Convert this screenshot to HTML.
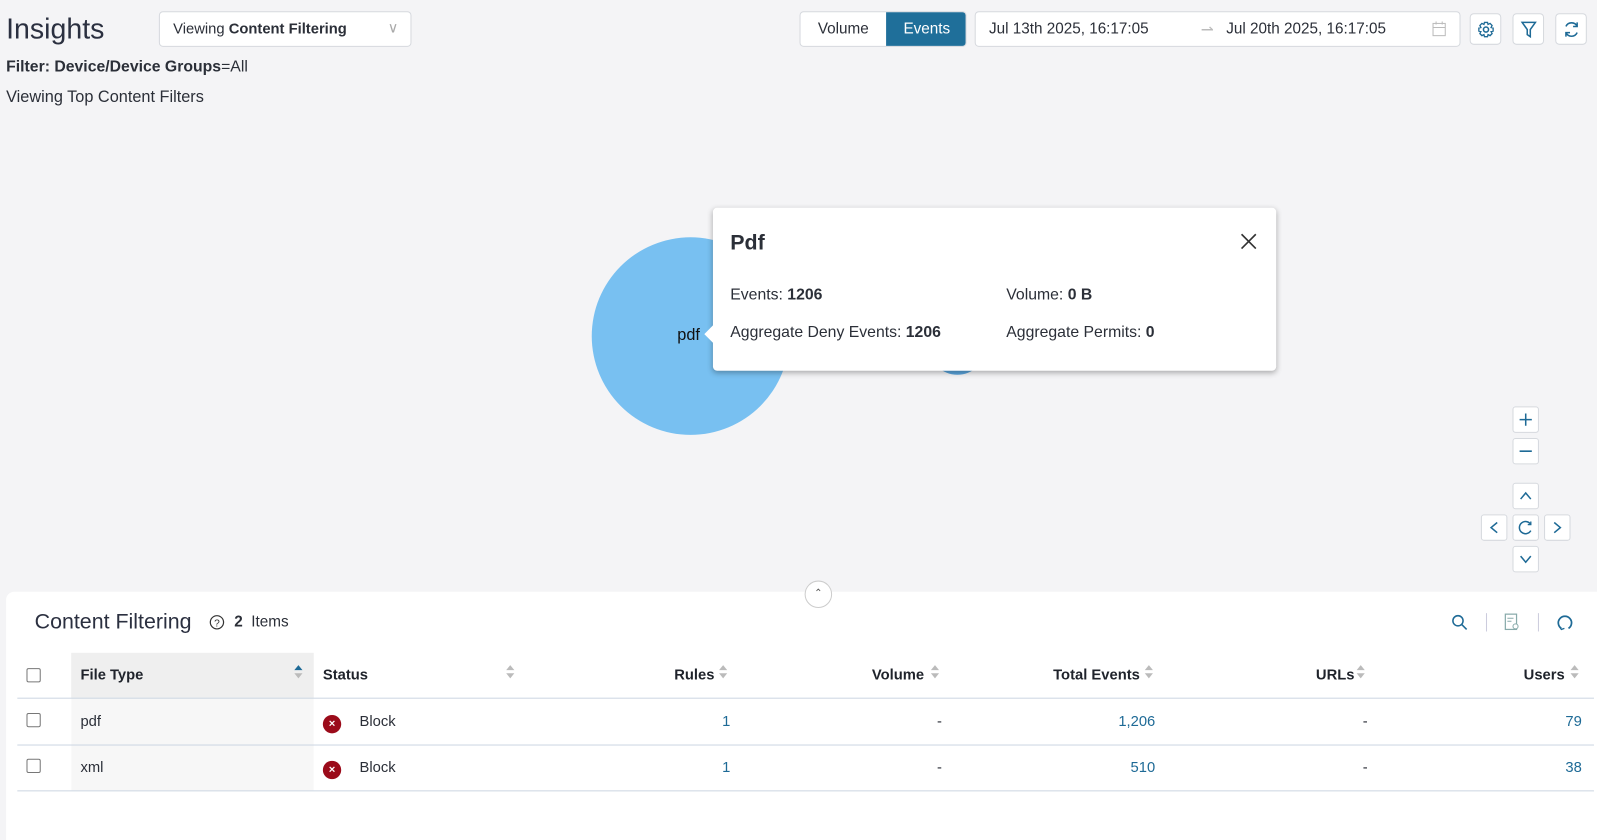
<!DOCTYPE html>
<html><head><meta charset="utf-8"><style>
*{box-sizing:border-box;margin:0;padding:0}
body{width:1597px;height:825px;background:#f4f4f6;font-family:"Liberation Sans",sans-serif;color:#2b2f38;position:relative;overflow:hidden;font-size:14px}
#w{position:absolute;left:0;top:0;width:1568px;height:810px;transform:scale(1.0185);transform-origin:0 0}
.a{position:absolute}
.btn{position:absolute;background:#fff;border:1px solid #d6d9de;border-radius:4px}
.ico{position:absolute;width:31px;height:31px;background:#fff;border:1px solid #d6d9de;border-radius:4px;display:flex;align-items:center;justify-content:center}
.nav{position:absolute;width:26px;height:26px;background:#fff;border:1px solid #d6d9de;border-radius:3px;display:flex;align-items:center;justify-content:center}
.th{position:absolute;top:655px;font-weight:bold;font-size:14.5px;color:#1f232b}
.s{position:absolute;width:8px;height:14px}
.s:before{content:"";position:absolute;left:0;top:0;border:4px solid transparent;border-bottom:5px solid #bbb;border-top:0}
.s:after{content:"";position:absolute;left:0;top:8px;border:4px solid transparent;border-top:5px solid #bbb;border-bottom:0}
.cb{position:absolute;left:26px;width:14px;height:14px;border:1px solid #777;border-radius:2px;background:#fff}
.td{position:absolute;font-size:14.5px}
.lk{color:#1e6a96}
.x{position:absolute;left:317px;width:18px;height:18px;border-radius:50%;background:#9b0b1a;color:#fff;font-size:11px;font-weight:bold;text-align:center;line-height:18px}
</style></head><body><div id="w">
<div class="a" style="left:6px;top:13px;font-size:28px;color:#2b3040">Insights</div>
<div class="btn" style="left:156px;top:11px;width:248px;height:35px;font-size:14.5px;padding:9px 0 0 13px">Viewing <b>Content Filtering</b><span class="a" style="right:12px;top:7px;color:#aaa;font-size:14px">&#8744;</span></div>
<div class="a" style="left:6px;top:57px;font-size:15.5px"><b>Filter: Device/Device Groups</b>=All</div>
<div class="a" style="left:6px;top:87px;font-size:16px">Viewing Top Content Filters</div>

<div class="btn" style="left:785px;top:11px;width:164px;height:35px;overflow:hidden;font-size:15px">
<div class="a" style="left:0;top:0;width:84px;height:35px;text-align:center;line-height:33px">Volume</div>
<div class="a" style="left:84px;top:-1px;width:80px;height:35px;background:#1f6f9a;color:#fff;text-align:center;line-height:35px">Events</div></div>
<div class="btn" style="left:957px;top:11px;width:477px;height:35px;font-size:15px">
<span class="a" style="left:13px;top:8px">Jul 13th 2025, 16:17:05</span>
<span class="a" style="left:221px;top:8px;color:#bbb">&#8640;</span>
<span class="a" style="left:246px;top:8px">Jul 20th 2025, 16:17:05</span>
<svg class="a" style="left:448px;top:9px" width="14" height="15" viewBox="0 0 14 15"><rect x="1" y="2" width="12" height="12" fill="none" stroke="#bbb"/><path d="M1 6h12M4 0v3M10 0v3" stroke="#bbb"/></svg></div>
<div class="ico" style="left:1443px;top:13px"><svg width="18" height="18" viewBox="0 0 18 18"><circle cx="9" cy="9" r="2.5" fill="none" stroke="#1e6a96" stroke-width="1.5"/><path d="M7.5 2h3l.5 2 2-1 2 2-1 2 2 .5v3l-2 .5 1 2-2 2-2-1-.5 2h-3l-.5-2-2 1-2-2 1-2-2-.5v-3l2-.5-1-2 2-2 2 1z" fill="none" stroke="#1e6a96" stroke-width="1.3"/></svg></div>
<div class="ico" style="left:1485px;top:13px"><svg width="16" height="18" viewBox="0 0 16 18"><path d="M1.5 2h13l-5 7v7l-3-2V9z" fill="none" stroke="#1e6a96" stroke-width="1.5"/></svg></div>
<div class="ico" style="left:1527px;top:13px"><svg width="18" height="18" viewBox="0 0 18 18"><path d="M14.5 6A6 6 0 0 0 3.5 6M3.5 12a6 6 0 0 0 11 0M14.5 2v4h-4M3.5 16v-4h4" fill="none" stroke="#1e6a96" stroke-width="1.5"/></svg></div>

<div class="a" style="left:581px;top:233px;width:194px;height:194px;border-radius:50%;background:#78c0f1"></div>
<div class="a" style="left:912px;top:312px;width:56px;height:56px;border-radius:50%;background:#5aa5dc"></div>
<div class="a" style="left:665px;top:321px;font-size:16px;color:#111">pdf</div>
<div class="a" style="left:700px;top:204px;width:553px;height:160px;background:#fff;border-radius:4px;box-shadow:0 2px 6px rgba(0,0,0,.3)">
<div class="a" style="left:-6px;top:118px;width:12px;height:12px;background:#fff;transform:rotate(45deg)"></div>
<div class="a" style="left:17px;top:23px;font-size:21px;font-weight:bold">Pdf</div>
<svg class="a" style="left:517px;top:24px" width="18" height="18" viewBox="0 0 18 18"><path d="M2 2l14 14M16 2L2 16" stroke="#333" stroke-width="1.6"/></svg>
<div class="a" style="left:17px;top:77px;font-size:15.5px">Events: <b>1206</b></div>
<div class="a" style="left:288px;top:77px;font-size:15.5px">Volume: <b>0 B</b></div>
<div class="a" style="left:17px;top:114px;font-size:15.5px">Aggregate Deny Events: <b>1206</b></div>
<div class="a" style="left:288px;top:114px;font-size:15.5px">Aggregate Permits: <b>0</b></div>
</div>

<div class="nav" style="left:1485px;top:399px"><svg width="14" height="14"><path d="M7 1v12M1 7h12" stroke="#1e6a96" stroke-width="1.5"/></svg></div>
<div class="nav" style="left:1485px;top:430px"><svg width="14" height="14"><path d="M1 7h12" stroke="#1e6a96" stroke-width="1.5"/></svg></div>
<div class="nav" style="left:1485px;top:474px"><svg width="14" height="14"><path d="M2 10l5-6 5 6" fill="none" stroke="#1e6a96" stroke-width="1.5"/></svg></div>
<div class="nav" style="left:1454px;top:505px"><svg width="14" height="14"><path d="M10 2L4 7l6 5" fill="none" stroke="#1e6a96" stroke-width="1.5"/></svg></div>
<div class="nav" style="left:1485px;top:505px"><svg width="16" height="16"><path d="M13 5A6 6 0 1 0 13 11" fill="none" stroke="#1e6a96" stroke-width="1.5"/><path d="M13 2v3h-3" fill="none" stroke="#1e6a96" stroke-width="1.3"/></svg></div>
<div class="nav" style="left:1516px;top:505px"><svg width="14" height="14"><path d="M4 2l6 5-6 5" fill="none" stroke="#1e6a96" stroke-width="1.5"/></svg></div>
<div class="nav" style="left:1485px;top:536px"><svg width="14" height="14"><path d="M2 4l5 6 5-6" fill="none" stroke="#1e6a96" stroke-width="1.5"/></svg></div>

<div class="a" style="left:6px;top:581px;width:1591px;height:244px;background:#fff;border-radius:8px 8px 0 0"></div>
<div class="a" style="left:790px;top:570px;width:27px;height:27px;border-radius:50%;background:#fff;border:1px solid #ccc;text-align:center;font-size:10px;line-height:24px;color:#555">&#8963;</div>
<div class="a" style="left:34px;top:599px;font-size:21px;color:#2b3040">Content Filtering</div>
<svg class="a" style="left:205px;top:603px" width="16" height="16"><circle cx="8" cy="8" r="6.5" fill="none" stroke="#333" stroke-width="1.2"/><text x="8" y="12" font-size="10" text-anchor="middle" fill="#333" font-family="Liberation Sans">?</text></svg>
<div class="a" style="left:230px;top:602px;font-size:15px"><b>2</b>&nbsp;&nbsp;Items</div>
<svg class="a" style="left:1425px;top:603px" width="16" height="16"><circle cx="6.5" cy="6.5" r="5" fill="none" stroke="#1e6a96" stroke-width="1.5"/><path d="M10 10l5 5" stroke="#1e6a96" stroke-width="1.5"/></svg>
<div class="a" style="left:1459px;top:602px;width:1px;height:18px;background:#ccd"></div>
<svg class="a" style="left:1477px;top:602px" width="16" height="18"><rect x="1" y="1" width="11" height="15" fill="none" stroke="#8aa" stroke-width="1.2"/><path d="M3 5h6M3 8h4" stroke="#8aa"/><circle cx="11" cy="13" r="2.5" fill="#fff" stroke="#8aa"/></svg>
<div class="a" style="left:1510px;top:602px;width:1px;height:18px;background:#ccd"></div>
<svg class="a" style="left:1528px;top:603px" width="17" height="17"><path d="M5 14A6.5 6.5 0 1 1 12 14" fill="none" stroke="#1e6a96" stroke-width="1.7"/><path d="M3 12l2 3 3-1" fill="none" stroke="#1e6a96" stroke-width="1.3"/></svg>

<div class="a" style="left:70px;top:641px;width:238px;height:135px;background:#f7f7f7"></div>
<div class="a" style="left:70px;top:641px;width:238px;height:44px;background:#efefef"></div>
<div class="a" style="left:17px;top:685px;width:1548px;height:1px;background:#ccd6e2"></div>
<div class="a" style="left:17px;top:731px;width:1548px;height:1px;background:#ccd6e2"></div>
<div class="a" style="left:17px;top:776px;width:1548px;height:1px;background:#ccd6e2"></div>

<div class="cb" style="top:656px"></div><div class="cb" style="top:700px"></div><div class="cb" style="top:745px"></div>
<div class="th" style="left:79px">File Type</div>
<div class="a" style="left:289px;top:653px;border:4px solid transparent;border-bottom:5px solid #1e6a96;border-top:0"></div>
<div class="a" style="left:289px;top:661px;border:4px solid transparent;border-top:5px solid #bbb;border-bottom:0"></div>
<div class="th" style="left:317px">Status</div><div class="s" style="left:497px;top:653px"></div>
<div class="th" style="left:662px">Rules</div><div class="s" style="left:706px;top:653px"></div>
<div class="th" style="left:856px">Volume</div><div class="s" style="left:914px;top:653px"></div>
<div class="th" style="left:1034px">Total Events</div><div class="s" style="left:1124px;top:653px"></div>
<div class="th" style="left:1292px">URLs</div><div class="s" style="left:1332px;top:653px"></div>
<div class="th" style="left:1496px">Users</div><div class="s" style="left:1542px;top:653px"></div>

<div class="td" style="left:79px;top:701px">pdf</div>
<div class="x" style="top:702px">×</div><div class="td" style="left:353px;top:701px">Block</div>
<div class="td lk" style="left:709px;top:701px">1</div>
<div class="td" style="left:920px;top:701px">-</div>
<div class="td lk" style="left:1098px;top:701px">1,206</div>
<div class="td" style="left:1338px;top:701px">-</div>
<div class="td lk" style="left:1537px;top:701px">79</div>

<div class="td" style="left:79px;top:746px">xml</div>
<div class="x" style="top:747px">×</div><div class="td" style="left:353px;top:746px">Block</div>
<div class="td lk" style="left:709px;top:746px">1</div>
<div class="td" style="left:920px;top:746px">-</div>
<div class="td lk" style="left:1110px;top:746px">510</div>
<div class="td" style="left:1338px;top:746px">-</div>
<div class="td lk" style="left:1537px;top:746px">38</div>
</div></body></html>
